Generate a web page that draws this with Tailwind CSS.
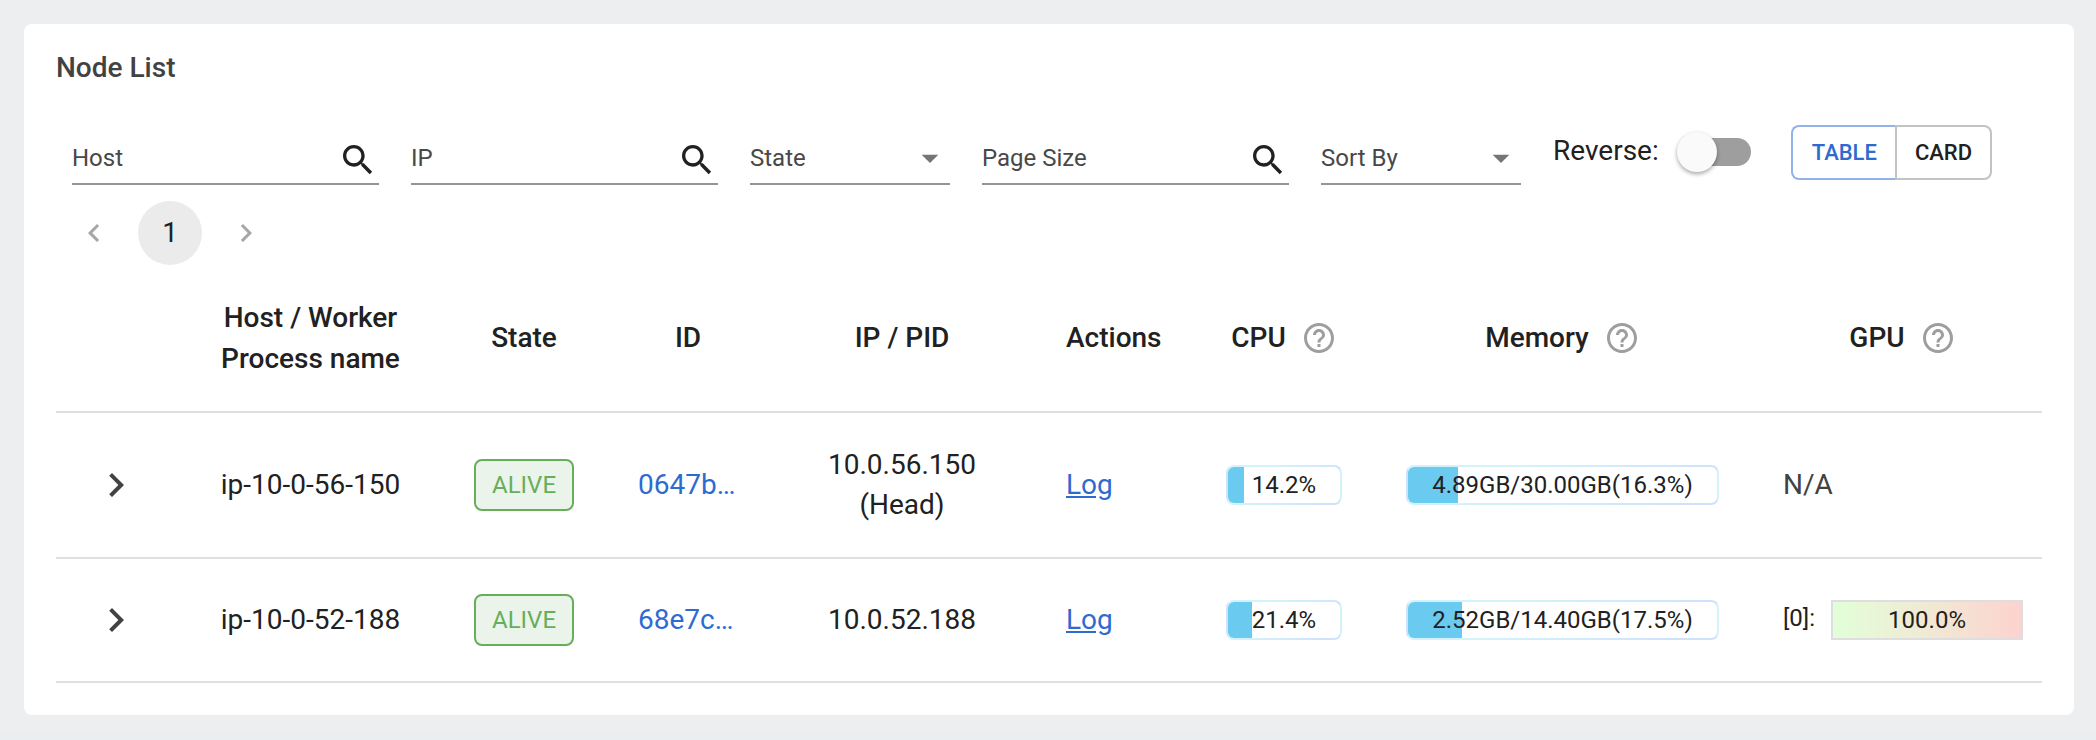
<!DOCTYPE html>
<html lang="en">
<head>
<meta charset="utf-8">
<title>Node List</title>
<script src="https://cdn.jsdelivr.net/npm/@tailwindcss/browser@4"></script>
</head>
<body class="min-h-screen border-b-[9px] border-[#eaeef1] bg-[#edeef0] p-6 pr-[22px] pb-4 font-[Roboto,sans-serif] text-[28px] leading-10 text-[#212121]">
<svg class="hidden" aria-hidden="true">
  <symbol id="search" viewBox="0 0 24 24"><path d="M15.5 14h-.79l-.28-.27C15.41 12.59 16 11.11 16 9.5 16 5.91 13.09 3 9.5 3S3 5.91 3 9.5 5.91 16 9.5 16c1.61 0 3.09-.59 4.23-1.57l.27.28v.79l5 4.99L20.49 19l-4.99-5zm-6 0C7.01 14 5 11.99 5 9.5S7.01 5 9.5 5 14 7.01 14 9.5 11.99 14 9.5 14z"/></symbol>
  <symbol id="drop" viewBox="0 0 24 24"><path d="M7 10l5 5 5-5z"/></symbol>
  <symbol id="before" viewBox="0 0 24 24"><path d="M15.41 7.41L14 6l-6 6 6 6 1.41-1.41L10.83 12z"/></symbol>
  <symbol id="next" viewBox="0 0 24 24"><path d="M10 6L8.59 7.41 13.17 12l-4.58 4.59L10 18l6-6z"/></symbol>
  <symbol id="help" viewBox="0 0 24 24"><path d="M11 18h2v-2h-2v2zm1-16C6.48 2 2 6.48 2 12s4.48 10 10 10 10-4.48 10-10S17.52 2 12 2zm0 18c-4.41 0-8-3.59-8-8s3.59-8 8-8 8 3.59 8 8-3.59 8-8 8zm0-14c-2.21 0-4 1.79-4 4h2c0-1.1.9-2 2-2s2 .9 2 2c0 2-3 1.75-3 5h2c0-2.25 3-2.5 3-5 0-2.21-1.79-4-4-4z"/></symbol>
</svg>
<main class="rounded-lg bg-white px-8 pt-6 pb-8">
  <h1 class="font-medium text-[#424242]">Node List</h1>

  <form class="mt-[37px] flex flex-wrap items-start gap-x-8 pl-4 text-2xl">
    <label class="mt-3 flex h-12 w-[307px] items-center border-b-2 border-[#949494]">
      <input type="text" aria-label="Host" placeholder="Host" class="min-w-0 flex-1 pb-1 outline-none placeholder:text-[#484848]">
      <button type="button" aria-label="Search host" class="mr-px size-10 shrink-0"><svg class="size-10 fill-[#212121]"><use href="#search"/></svg></button>
    </label>
    <label class="mt-3 flex h-12 w-[307px] items-center border-b-2 border-[#949494]">
      <input type="text" aria-label="IP" placeholder="IP" class="min-w-0 flex-1 pb-1 outline-none placeholder:text-[#484848]">
      <button type="button" aria-label="Search IP" class="mr-px size-10 shrink-0"><svg class="size-10 fill-[#212121]"><use href="#search"/></svg></button>
    </label>
    <div class="mt-3 grid h-12 w-[200px] items-center border-b-2 border-[#949494] pb-1">
      <select aria-label="State" class="col-start-1 row-start-1 w-full appearance-none text-[#484848] outline-none"><option>State</option></select>
      <svg class="pointer-events-none col-start-1 row-start-1 size-10 justify-self-end fill-[#757575]"><use href="#drop"/></svg>
    </div>
    <label class="mt-3 flex h-12 w-[307px] items-center border-b-2 border-[#949494]">
      <input type="text" aria-label="Page Size" placeholder="Page Size" class="min-w-0 flex-1 pb-1 outline-none placeholder:text-[#484848]">
      <button type="button" aria-label="Apply page size" class="mr-px size-10 shrink-0"><svg class="size-10 fill-[#212121]"><use href="#search"/></svg></button>
    </label>
    <div class="mt-3 grid h-12 w-[200px] items-center border-b-2 border-[#949494] pb-1">
      <select aria-label="Sort By" class="col-start-1 row-start-1 w-full appearance-none text-[#484848] outline-none"><option>Sort By</option></select>
      <svg class="pointer-events-none col-start-1 row-start-1 size-10 justify-self-end fill-[#757575]"><use href="#drop"/></svg>
    </div>
    <label class="mt-[7px] flex h-10 items-center gap-[18px] text-[28px]"><span class="pb-0.5">Reverse:</span>
      <input type="checkbox" role="switch" class="flex h-7 w-[74px] appearance-none items-center before:z-10 before:size-10 before:shrink-0 before:rounded-full before:bg-[#fafafa] before:shadow-[0_2px_4px_rgba(0,0,0,0.35)] after:-ml-[34px] after:h-7 after:w-[68px] after:shrink-0 after:rounded-full after:bg-[#9e9e9e]">
    </label>
    <div class="ml-2 flex h-[55px] text-[22px] font-medium" role="group" aria-label="View">
      <button type="button" aria-pressed="true" class="rounded-l-lg border-2 border-r-0 border-[#92b3e8] pr-[18px] pl-[19px] text-[#2e6bd0]">TABLE</button>
      <button type="button" aria-pressed="false" class="rounded-r-lg border-2 border-[#c3c3c3] px-[18px]">CARD</button>
    </div>
  </form>

  <nav aria-label="Pages" class="mt-4 flex gap-3 pl-[6px]">
    <button type="button" aria-label="Previous page" class="grid size-16 place-items-center"><svg class="size-9 fill-[#a6a6a6]"><use href="#before"/></svg></button>
    <button type="button" aria-current="page" class="size-16 rounded-full bg-[#ebebeb]">1</button>
    <button type="button" aria-label="Next page" class="grid size-16 place-items-center"><svg class="size-9 fill-[#a6a6a6]"><use href="#next"/></svg></button>
  </nav>

  <table class="-mt-px w-full table-fixed text-center">
    <colgroup>
      <col class="w-[123px]"><col class="w-[263px]"><col class="w-[164px]"><col class="w-[164px]"><col class="w-[264px]"><col class="w-[160px]"><col class="w-[180px]"><col class="w-[377px]"><col>
    </colgroup>
    <thead>
      <tr class="h-[148px] border-b-2 border-[#e0e0e0] leading-[41px] [&>th]:px-8 [&>th]:font-medium">
        <th></th>
        <th>Host / Worker Process name</th>
        <th>State</th>
        <th>ID</th>
        <th>IP / PID</th>
        <th class="text-left">Actions</th>
        <th><div class="flex items-center justify-center gap-[15px]">CPU<svg class="size-9 shrink-0 fill-[#9e9e9e]"><use href="#help"/></svg></div></th>
        <th><div class="flex items-center justify-center gap-[15px]">Memory<svg class="size-9 shrink-0 fill-[#9e9e9e]"><use href="#help"/></svg></div></th>
        <th><div class="flex items-center justify-center gap-[15px] pl-3">GPU<svg class="size-9 shrink-0 fill-[#9e9e9e]"><use href="#help"/></svg></div></th>
      </tr>
    </thead>
    <tbody>
      <tr class="h-[146px] border-b-2 border-[#e0e0e0] [&>td]:px-8">
        <td><button type="button" aria-label="Expand ip-10-0-56-150" class="block size-14"><svg class="mx-auto size-12 fill-[#424242]"><use href="#next"/></svg></button></td>
        <td class="whitespace-nowrap">ip-10-0-56-150</td>
        <td><span class="flex h-[52px] w-[100px] items-center justify-center rounded-lg border-2 border-[#67ae5b] bg-[#ebf4ea] text-2xl text-[#67ae5b]">ALIVE</span></td>
        <td><a href="#0647b" class="block truncate text-left text-[#2e6bd0]">0647b…</a></td>
        <td>10.0.56.150<br>(Head)</td>
        <td class="text-left"><a href="#log-1" class="text-[#2e6bd0] underline">Log</a></td>
        <td><div class="grid h-10 overflow-hidden rounded-lg border-2 border-transparent text-2xl leading-9 [background:linear-gradient(#fff,#fff)_padding-box,linear-gradient(45deg,#d2f3fc_30%,#cfe2fb_90%)]"><div class="col-start-1 row-start-1 bg-[#6bcaf0]" style="width:14.2%"></div><span class="col-start-1 row-start-1">14.2%</span></div></td>
        <td><div class="grid h-10 overflow-hidden rounded-lg border-2 border-transparent text-2xl leading-9 [background:linear-gradient(#fff,#fff)_padding-box,linear-gradient(45deg,#d2f3fc_30%,#cfe2fb_90%)]"><div class="col-start-1 row-start-1 bg-[#6bcaf0]" style="width:16.3%"></div><span class="col-start-1 row-start-1">4.89GB/30.00GB(16.3%)</span></div></td>
        <td class="text-left text-[#424242]">N/A</td>
      </tr>
      <tr class="h-[124px] border-b-2 border-[#e0e0e0] [&>td]:px-8">
        <td><button type="button" aria-label="Expand ip-10-0-52-188" class="block size-14"><svg class="mx-auto size-12 fill-[#424242]"><use href="#next"/></svg></button></td>
        <td class="whitespace-nowrap">ip-10-0-52-188</td>
        <td><span class="flex h-[52px] w-[100px] items-center justify-center rounded-lg border-2 border-[#67ae5b] bg-[#ebf4ea] text-2xl text-[#67ae5b]">ALIVE</span></td>
        <td><a href="#68e7c" class="block truncate text-left text-[#2e6bd0]">68e7c…</a></td>
        <td>10.0.52.188</td>
        <td class="text-left"><a href="#log-2" class="text-[#2e6bd0] underline">Log</a></td>
        <td><div class="grid h-10 overflow-hidden rounded-lg border-2 border-transparent text-2xl leading-9 [background:linear-gradient(#fff,#fff)_padding-box,linear-gradient(45deg,#d2f3fc_30%,#cfe2fb_90%)]"><div class="col-start-1 row-start-1 bg-[#6bcaf0]" style="width:21.4%"></div><span class="col-start-1 row-start-1">21.4%</span></div></td>
        <td><div class="grid h-10 overflow-hidden rounded-lg border-2 border-transparent text-2xl leading-9 [background:linear-gradient(#fff,#fff)_padding-box,linear-gradient(45deg,#d2f3fc_30%,#cfe2fb_90%)]"><div class="col-start-1 row-start-1 bg-[#6bcaf0]" style="width:17.5%"></div><span class="col-start-1 row-start-1">2.52GB/14.40GB(17.5%)</span></div></td>
        <td><div class="flex gap-4 text-2xl"><span class="leading-9">[0]:</span><div class="h-10 w-48 shrink-0 border-2 border-[#dedede] bg-linear-to-r from-[#e2ffd9] to-[#fcd3cf] leading-9">100.0%</div></div></td>
      </tr>
    </tbody>
  </table>
</main>
</body>
</html>
